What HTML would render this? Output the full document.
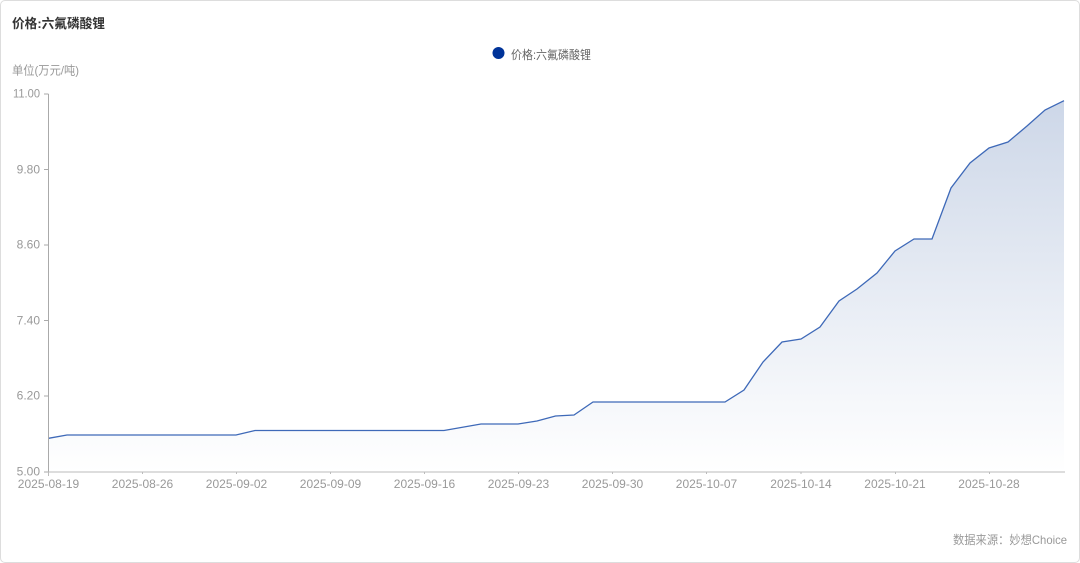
<!DOCTYPE html>
<html>
<head>
<meta charset="utf-8">
<style>
html,body{margin:0;padding:0;background:#fff;}
body{width:1080px;height:563px;overflow:hidden;position:relative;font-family:"Liberation Sans","Noto Sans CJK SC",sans-serif;}
#card{position:absolute;left:0;top:0;width:1078px;height:561px;border:1px solid #ddd;border-radius:5px;}
svg{position:absolute;left:0;top:0;filter:blur(0.3px);}
text{font-family:"Liberation Sans","Noto Sans CJK SC",sans-serif;}
.y{font-size:12px;fill:#999;text-anchor:end;}
.x{font-size:12px;fill:#999;text-anchor:middle;}
</style>
</head>
<body>
<div id="card"></div>
<svg width="1080" height="563" viewBox="0 0 1080 563">
<defs>
<linearGradient id="g" gradientUnits="userSpaceOnUse" x1="0" y1="100" x2="0" y2="472">
<stop offset="0" stop-color="#cdd7e8"/>
<stop offset="1" stop-color="#ffffff"/>
</linearGradient>
</defs>
<text x="12" y="28" font-size="13" font-weight="bold" fill="#333" textLength="93" lengthAdjust="spacingAndGlyphs">价格:六氟磷酸锂</text>
<circle cx="498.500" cy="53" r="6" fill="#003399"/>
<text x="511" y="59" font-size="12" fill="#666" textLength="80" lengthAdjust="spacingAndGlyphs">价格:六氟磷酸锂</text>
<text x="12" y="74.500" font-size="12" fill="#999" textLength="67" lengthAdjust="spacingAndGlyphs">单位(万元/吨)</text>
<path d="M48.500 438.300L67 435L236 435L255 430.500L444 430.500L481 424L518 424L537 421L555.500 416L574 415L593 402L725 402L744 390L763 362L782 342L801 339L820 327L839 301L857 289L877 273L895 251L914 239L932 239L951 188L970 163L989 148L1008 142L1027 126L1045 110L1064 100.700L1064 472L48.500 472Z" fill="url(#g)"/>
<path d="M48.500 438.300L67 435L236 435L255 430.500L444 430.500L481 424L518 424L537 421L555.500 416L574 415L593 402L725 402L744 390L763 362L782 342L801 339L820 327L839 301L857 289L877 273L895 251L914 239L932 239L951 188L970 163L989 148L1008 142L1027 126L1045 110L1064 100.700" fill="none" stroke="#3e69b8" stroke-width="1.300"/>
<path d="M48.500 94V472M44 94H48.500M44 169.500H48.500M44 245H48.500M44 320.500H48.500M44 396H48.500M44 472H48.500" fill="none" stroke="#aaa" stroke-width="1"/>
<path d="M48 472H1065" fill="none" stroke="#bbb" stroke-width="1"/>
<path d="M48.500 472V476M142.500 472V474M236.500 472V474M330.500 472V474M424.500 472V474M518.500 472V474M612.500 472V474M706.500 472V474M895.500 472V474M989.500 472V474M801 472V474" fill="none" stroke="#bbb" stroke-width="1"/>
<text class="y" x="40" y="97.500" textLength="27" lengthAdjust="spacingAndGlyphs">11.00</text>
<text class="y" x="40" y="173.500">9.80</text>
<text class="y" x="40" y="248.500">8.60</text>
<text class="y" x="40" y="324.500">7.40</text>
<text class="y" x="40" y="399.500">6.20</text>
<text class="y" x="40" y="475.500">5.00</text>
<text class="x" x="48.500" y="488">2025-08-19</text>
<text class="x" x="142.500" y="488">2025-08-26</text>
<text class="x" x="236.500" y="488">2025-09-02</text>
<text class="x" x="330.500" y="488">2025-09-09</text>
<text class="x" x="424.500" y="488">2025-09-16</text>
<text class="x" x="518.500" y="488">2025-09-23</text>
<text class="x" x="612.500" y="488">2025-09-30</text>
<text class="x" x="706.500" y="488">2025-10-07</text>
<text class="x" x="801" y="488">2025-10-14</text>
<text class="x" x="895" y="488">2025-10-21</text>
<text class="x" x="989" y="488">2025-10-28</text>
<text x="953" y="544" font-size="12" fill="#999" textLength="114" lengthAdjust="spacingAndGlyphs">数据来源：妙想Choice</text>
</svg>
</body>
</html>
